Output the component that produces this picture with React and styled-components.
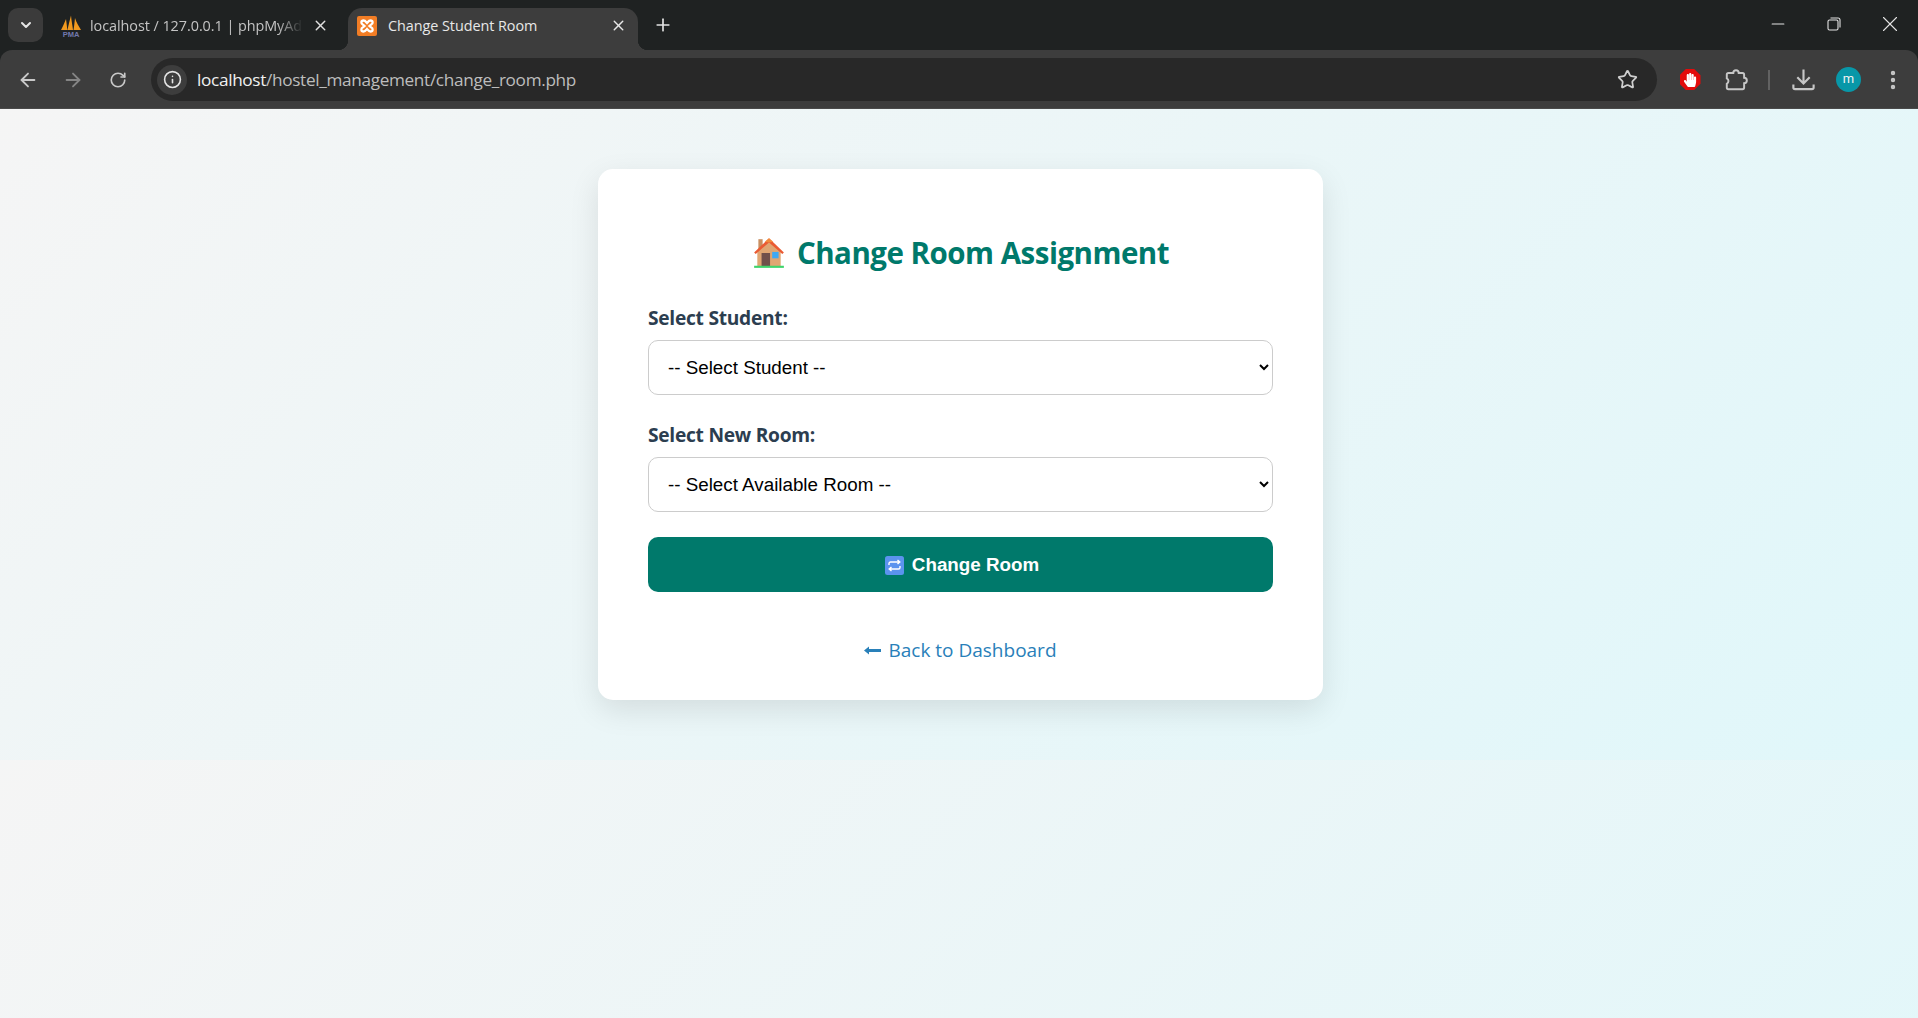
import React from "react";
import styled, { createGlobalStyle } from "styled-components";
import { ArrowLeft, ArrowRight, RotateCw, Info, Star, ChevronDown, X, Plus, Minus, MoreVertical } from "lucide-react";
import { FaHandPaper } from "react-icons/fa";

const Global = createGlobalStyle`
  html, body { margin: 0; padding: 0; height: 100%; overflow: hidden; background: #1f2222; }
  #root { height: 100%; }
  * { box-sizing: border-box; }
`;

const Shell = styled.div`
  display: flex; flex-direction: column; height: 1018px; width: 1918px; background: #1f2222;
  font-family: "Open Sans", "Liberation Sans", sans-serif;
`;
const TabStrip = styled.div`
  height: 50px; background: #1f2222; display: flex; align-items: flex-end;
  padding-left: 8px; color: #dcdcdc; flex: none;
`;
const TabSearch = styled.button`
  width: 35px; height: 34px; margin-bottom: 8px; border: 0; border-radius: 10px;
  background: #3b3b3b; color: #e6e6e6; display: flex; align-items: center; justify-content: center; padding: 0;
`;
const Tab = styled.div`
  position: relative; height: 42.5px; display: flex; align-items: center; flex: none;
  font-size: 14.4px; letter-spacing: -0.05px; white-space: nowrap;
  width: ${p => p.$active ? "290px" : "305px"};
  padding-left: ${p => p.$active ? "9px" : "17px"};
  padding-right: 11px;
  padding-bottom: 6px;
  background: ${p => p.$active ? "#3d3d3d" : "transparent"};
  color: ${p => p.$active ? "#e8e8e8" : "#c4c4c4"};
  border-radius: 14px 14px 0 0;
  ${p => p.$active && `
    &::before, &::after { content: ""; position: absolute; bottom: 0; width: 10px; height: 10px; }
    &::before { left: -10px; background: radial-gradient(circle at 0 0, transparent 10px, #3d3d3d 10.5px); }
    &::after { right: -10px; background: radial-gradient(circle at 100% 0, transparent 10px, #3d3d3d 10.5px); }
  `}
`;
const TabTitle = styled.span`
  flex: 1; overflow: hidden; margin-left: ${p => p.$fade ? "8px" : "11px"};
  ${p => p.$fade && "mask-image: linear-gradient(90deg, #000 88%, transparent 100%);"}
`;
const NewTab = styled.div`
  width: 42px; height: 42px; display: flex; align-items: center; justify-content: center;
  color: #e4e4e4; margin-bottom: 4px; margin-left: 4px;
`;
const WindowControls = styled.div`
  margin-left: auto; height: 50px; display: flex; align-items: center; padding-bottom: 2px; color: #e4e4e4;
`;
const WinButton = styled.div`
  width: 56px; display: flex; justify-content: center;
`;
const Toolbar = styled.div`
  height: 59px; background: #3d3d3d; border-radius: 12px 12px 0 0; display: flex; align-items: center;
  padding: 1px 0 0 5px; color: #c7c7c7; flex: none; border-bottom: 1px solid #4a4a4a;
`;
const NavButton = styled.div`
  width: 45px; height: 40px; display: flex; align-items: center; justify-content: center; flex: none;
  color: ${p => p.$dim ? "#858585" : "#c9c9c9"};
`;
const Omnibox = styled.div`
  width: 1506px; margin-left: 11px; height: 43px; border-radius: 22px; background: #282828; flex: none;
  display: flex; align-items: center; padding: 0 19px 0 6px;
`;
const InfoChip = styled.div`
  width: 30px; height: 30px; border-radius: 50%; background: #3d3d3d; color: #e4e4e4;
  display: flex; align-items: center; justify-content: center; flex: none;
`;
const Url = styled.span`
  margin-left: 10px; font-size: 17.2px; letter-spacing: -0.33px; color: #bdbdbd; flex: 1;
  b { font-weight: 400; color: #f1f1f1; }
`;
const ToolIcons = styled.div`
  display: flex; align-items: center; margin-left: 19px; flex: none;
`;
const ToolSlot = styled.div`
  width: ${p => p.$w || 45}px; padding-left: ${p => p.$pad || 0}px; display: flex; justify-content: center; align-items: center; flex: none;
`;
const StopBadge = styled.div`
  width: 21px; height: 21px; background: #e30b0b; color: #fff; display: flex; align-items: center; justify-content: center;
  clip-path: polygon(30% 0, 70% 0, 100% 30%, 100% 70%, 70% 100%, 30% 100%, 0 70%, 0 30%);
`;
const Divider = styled.div`
  width: 2px; height: 20px; background: #626262;
`;
const Avatar = styled.div`
  width: 25px; height: 25px; border-radius: 50%; background: #0897a8; color: #f2f2f2; font-size: 13px;
  display: flex; align-items: center; justify-content: center; font-family: "Roboto", sans-serif; padding-bottom: 2px;
`;
const Page = styled.main`
  flex: 1; background: linear-gradient(135deg, #f5f5f5, #e0f7fa) 0 0 / 1918px 651px repeat-y;
  padding-top: 60px; padding-left: 598px;
`;
const Card = styled.section`
  width: 725px; height: 531px; background: #fff; border-radius: 15px;
  box-shadow: 0 10px 30px rgba(0,0,0,.1); padding: 64px 50px 38px;
`;
const Title = styled.h2`
  margin: 0 0 33px; height: 40px; display: flex; align-items: center; justify-content: center; gap: 11px;
  font-size: 29.5px; font-weight: 700; color: #00796b; line-height: 40px; letter-spacing: -0.5px;
`;
const Field = styled.div`
  margin-bottom: ${p => p.$last ? "25px" : "28px"};
`;
const Label = styled.label`
  display: block; font-size: 19.2px; line-height: 24px; font-weight: 700; color: #2c3e50; margin-bottom: 10px; letter-spacing: -0.27px;
`;
const Select = styled.select`
  display: block; width: 100%; height: 55px; background: #fff; border: 1.5px solid #ccc; border-radius: 10px;
  padding: 0 15px; font: 18.8px "Liberation Sans", Arial, sans-serif; color: #000;
`;
const Submit = styled.button`
  width: 100%; height: 55px; border: 0; border-radius: 10px; background: #00796b; color: #fff;
  font: 700 18.8px "Liberation Sans", Arial, sans-serif; display: flex; align-items: center; justify-content: center; gap: 8px; padding: 1px 0 0 3px;
`;
const BackLink = styled.a`
  margin-top: 46px; display: flex; align-items: center; justify-content: center; gap: 7px; color: #2980b9;
  font-size: 19px; line-height: 24px; text-decoration: none;
`;

const PmaIcon = () => (
  <svg width="22" height="22" viewBox="0 0 22 22">
    <path d="M1 15 C3 11 4.500 8 6 4 C6.500 8 7 11 7.300 15Z M7.500 15 C8.500 10 9.500 6 11 0.500 C11.500 6 12.500 11 13 15Z M13.500 15 C14 12 14.500 8 15 3 C16.500 8 19 11 21 15Z" fill="#f29a1f" />
    <text x="11" y="21.500" textAnchor="middle" fontSize="7.500" fontWeight="700" fontFamily="Liberation Sans, sans-serif" fill="#7278ad">PMA</text>
  </svg>
);
const XamppIcon = () => (
  <svg width="20" height="20" viewBox="0 0 20 20">
    <rect width="20" height="20" rx="2" fill="#f27d25" />
    <path d="M6.500 4.500 C4 4.500 3.500 7.500 6 8.700 L7.500 10 L6 11.300 C3.500 12.500 4 15.500 6.500 15.500 C8.500 15.500 9 14 10 13 C11 14 11.500 15.500 13.500 15.500 C16 15.500 16.500 12.500 14 11.300 L12.500 10 L14 8.700 C16.500 7.500 16 4.500 13.500 4.500 C11.500 4.500 11 6 10 7 C9 6 8.500 4.500 6.500 4.500Z" fill="none" stroke="#fff" strokeWidth="2.300" />
  </svg>
);
const RestoreIcon = () => (
  <svg width="14" height="14" viewBox="0 0 14 14" fill="none" stroke="currentColor" strokeWidth="1.100">
    <rect x="1" y="3" width="10" height="10" rx="1.500" />
    <path d="M3.500 1 H11 A2 2 0 0 1 13 3 V10.500" />
  </svg>
);
const PuzzleIcon = () => (
  <svg width="26" height="26" viewBox="0 0 24 24" fill="none" stroke="currentColor" strokeWidth="1.800">
    <path d="M5 5.500 H9.500 a2.500 2.500 0 0 1 5 0 H18 a1.500 1.500 0 0 1 1.500 1.500 V10 a2.500 2.500 0 0 1 0 5 V19 a1.500 1.500 0 0 1 -1.500 1.500 H5 a1.500 1.500 0 0 1 -1.500 -1.500 v-3.500 a2.800 2.800 0 0 0 0 -5 V7 A1.500 1.500 0 0 1 5 5.500z" />
  </svg>
);
const DownloadIcon = () => (
  <svg width="27" height="27" viewBox="0 0 24 24" fill="none" stroke="currentColor" strokeWidth="1.900">
    <path d="M12 3 V15 M6.500 10 L12 15.500 L17.500 10" />
    <path d="M3 16.500 V19 a1.500 1.500 0 0 0 1.500 1.500 H19.500 a1.500 1.500 0 0 0 1.500 -1.500 V16.500" />
  </svg>
);
const HouseIcon = () => (
  <svg width="34" height="34" viewBox="0 0 32 32">
    <rect x="6" y="3" width="4" height="10" fill="#c98f61" />
    <path d="M5 14 L16 4 L27 14 V29 H5Z" fill="#e0a672" />
    <path d="M2 15.500 L16 2 L30 15.500 L28.500 17 L16 6 L3.500 17Z" fill="#ea5b33" />
    <path d="M12 5.500 L16 2 L20 5.500 L16 6Z" fill="#f28a3c" />
    <rect x="9" y="16" width="8" height="13" fill="#70504a" />
    <rect x="19" y="15" width="6" height="6" fill="#3fa9f5" />
    <rect x="2" y="28" width="28" height="2" fill="#3fd46b" />
  </svg>
);
const RepeatIcon = () => (
  <svg width="19" height="19" viewBox="0 0 19 19" fill="none">
    <rect width="19" height="19" rx="2.500" fill="#5b93ee" />
    <path d="M4 9 V7.500 A1.500 1.500 0 0 1 5.500 6 H14 M12.500 4 L14.800 6 L12.500 8" stroke="#fff" strokeWidth="1.400" />
    <path d="M15 10 V11.500 A1.500 1.500 0 0 1 13.500 13 H5 M6.500 11 L4.200 13 L6.500 15" stroke="#fff" strokeWidth="1.400" />
  </svg>
);
const BackArrow = () => (
  <svg width="17" height="9" viewBox="0 0 17 9">
    <path d="M0 4.500 L5 0.500 V3 H17 V6 H5 V8.500Z" fill="#2980b9" />
  </svg>
);

export default function App() {
  return (
    <Shell>
      <Global />
      <TabStrip>
        <TabSearch><ChevronDown size={16} strokeWidth={3} /></TabSearch>
        <Tab>
          <PmaIcon />
          <TabTitle $fade>localhost / 127.0.0.1 | phpMyAdmin</TabTitle>
          <X size={17} strokeWidth={2} color="#e0e0e0" style={{ marginLeft: 9, marginRight: 8 }} />
        </Tab>
        <Tab $active>
          <XamppIcon />
          <TabTitle>Change Student Room</TabTitle>
          <X size={17} strokeWidth={2} color="#e8e8e8" />
        </Tab>
        <NewTab><Plus size={20} strokeWidth={2} /></NewTab>
        <WindowControls>
          <WinButton><Minus size={20} strokeWidth={1.4} /></WinButton>
          <WinButton><RestoreIcon /></WinButton>
          <WinButton><X size={26} strokeWidth={1} /></WinButton>
        </WindowControls>
      </TabStrip>
      <Toolbar>
        <NavButton><ArrowLeft size={22} strokeWidth={2} /></NavButton>
        <NavButton $dim><ArrowRight size={22} strokeWidth={2} /></NavButton>
        <NavButton><RotateCw size={18} strokeWidth={2.2} /></NavButton>
        <Omnibox>
          <InfoChip><Info size={19} strokeWidth={2} /></InfoChip>
          <Url><b>localhost</b>/hostel_management/change_room.php</Url>
          <Star size={21} strokeWidth={2} color="#d0d0d0" />
        </Omnibox>
        <ToolIcons>
          <ToolSlot $w={28}><StopBadge><FaHandPaper size={14} /></StopBadge></ToolSlot>
          <ToolSlot $w={64}><PuzzleIcon /></ToolSlot>
          <ToolSlot $w={2}><Divider /></ToolSlot>
          <ToolSlot $w={66}><DownloadIcon /></ToolSlot>
          <ToolSlot $w={25}><Avatar>m</Avatar></ToolSlot>
          <ToolSlot $w={58} $pad={6}><MoreVertical size={24} strokeWidth={2.4} /></ToolSlot>
        </ToolIcons>
      </Toolbar>
      <Page>
        <Card>
          <Title><HouseIcon /><span>Change Room Assignment</span></Title>
          <Field>
            <Label>Select Student:</Label>
            <Select defaultValue=""><option value="">-- Select Student --</option></Select>
          </Field>
          <Field $last>
            <Label>Select New Room:</Label>
            <Select defaultValue=""><option value="">-- Select Available Room --</option></Select>
          </Field>
          <Submit><RepeatIcon />Change Room</Submit>
          <BackLink href="#"><BackArrow />Back to Dashboard</BackLink>
        </Card>
      </Page>
    </Shell>
  );
}
